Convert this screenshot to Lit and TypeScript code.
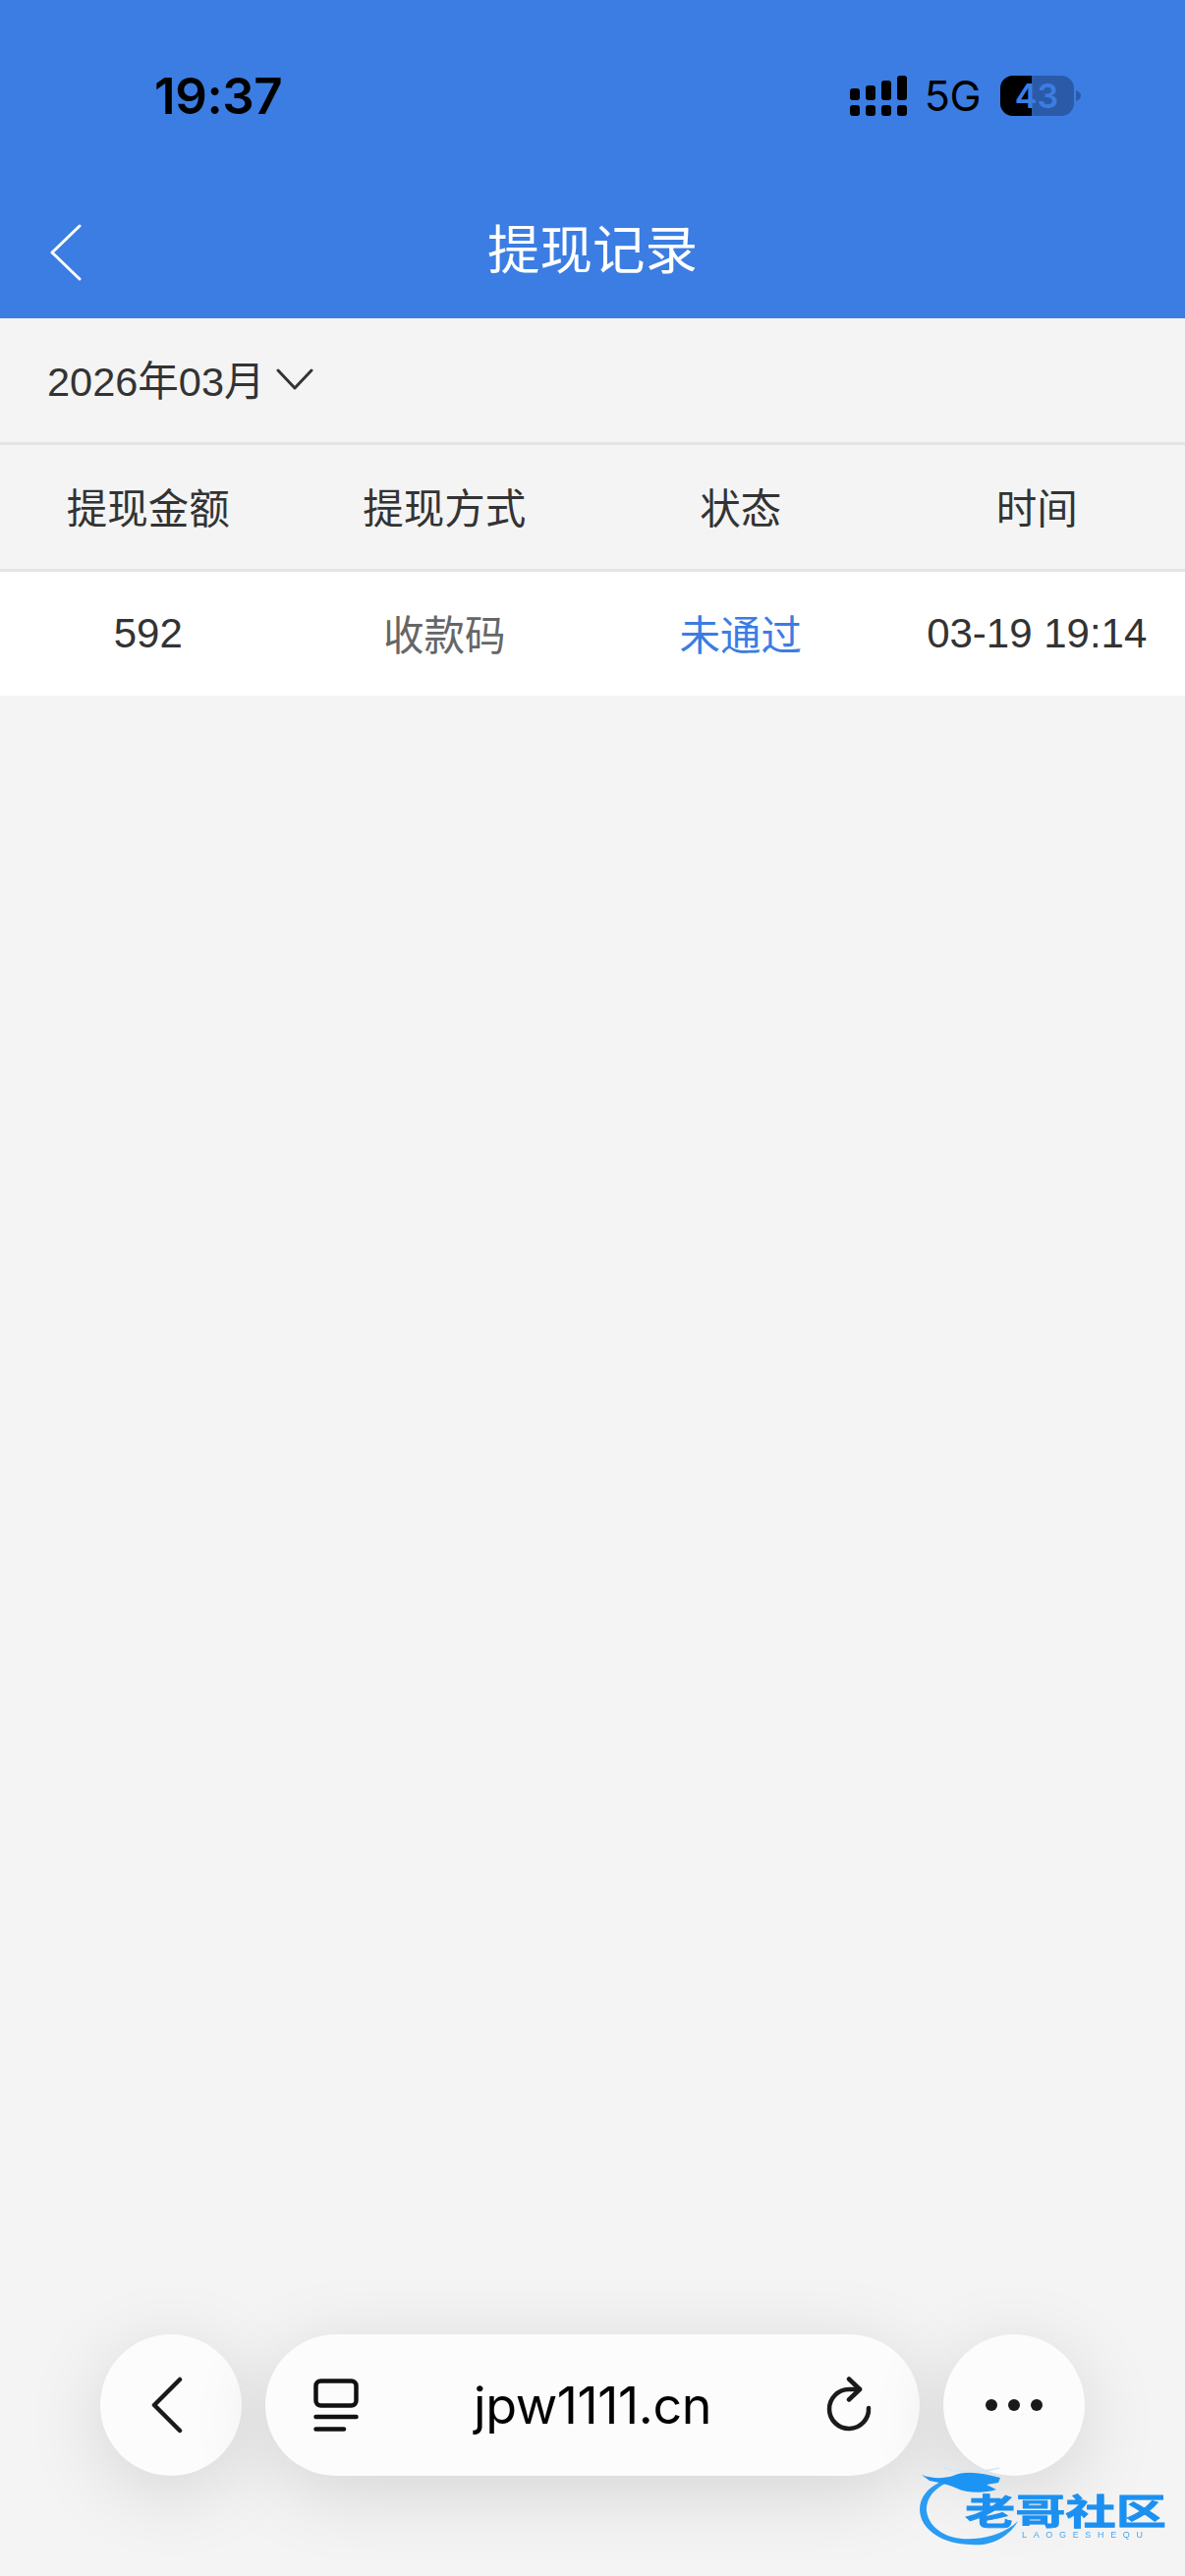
import { LitElement, html, css } from "lit";
import { customElement } from "lit/decorators.js";

@customElement("app-root")
export class AppRoot extends LitElement {
  static styles = css`
    :host {
      display: block;
      position: relative;
      width: 1206px;
      height: 2622px;
      overflow: hidden;
      background: #f4f4f4;
      font-family: "Liberation Sans", "Noto Sans CJK SC", sans-serif;
      color: #333;
    }
    .top { background: #3b7de2; height: 324px; display: flex; flex-direction: column; }
    .status { height: 195px; display: flex; align-items: center; justify-content: space-between; padding: 0 106px 0 157px; color: #000; flex: none; }
    .time { font: 600 51px Inter, sans-serif; letter-spacing: -0.4px; line-height: 1; }
    .sys { display: flex; align-items: center; }
    .sig { display: block; width: 58px; height: 41px; }
    .net { font: 400 43px Inter, sans-serif; line-height: 1; margin: 0 20px 0 18px; letter-spacing: -0.5px; }
    .batt { display: block; width: 82px; height: 41px; }
    .batt text { font: 600 34px Inter, sans-serif; fill: #3b7de2; }
    .nav { flex: 1; position: relative; display: flex; align-items: center; justify-content: center; padding-bottom: 8px; }
    .nav .title { color: #fff; font-size: 53.500px; line-height: 1; }
    .nav svg { position: absolute; left: 50px; top: 33px; width: 34px; height: 58px; }
    .date { height: 126px; display: flex; align-items: center; padding: 0 0 5px 48px; box-sizing: border-box; gap: 12px; font-size: 41.500px; }
    .date svg { width: 38px; height: 22px; display: block; margin-top: 3px; }
    .grid { display: grid; grid-template-columns: repeat(4, 1fr); height: 126px; border-top: 3px solid #e4e4e4; font-size: 41.500px; text-align: center; align-items: center; }
    .grid > div { margin-top: -3px; }
    .grid > .num { font-size: 42px; margin-top: -1px; }
    .row { background: #fff; }
    .muted { color: #666; }
    .blue { color: #3b7de2; }
    .bar { position: absolute; left: 102px; right: 102px; bottom: 102px; display: flex; gap: 24px; height: 144px; }
    .btn, .pill { background: #fcfcfc; box-shadow: 0 16px 80px rgba(0, 0, 0, 0.13); border-radius: 72px; display: flex; align-items: center; }
    .btn { width: 144px; justify-content: center; flex: none; }
    .pill { flex: 1; justify-content: space-between; padding: 0 47px 0 47px; color: #000; }
    .url { font: 400 52px Inter, sans-serif; letter-spacing: -0.4px; }
    .ic { display: block; }
    .chev { margin-right: 9px; }
    .mark { position: absolute; left: 930px; top: 2500px; width: 270px; height: 100px; filter: blur(0.7px); }
    .mark .cn { font: 700 36px "Noto Sans CJK SC", sans-serif; fill: #1c90f0; stroke: #1c90f0; stroke-width: 0.8px; }
    .mark .en { font: 400 9px "Liberation Sans", sans-serif; fill: #4aa6ee; }
  `;

  render() {
    return html`
      <div class="top">
        <div class="status">
          <div class="time">19:37</div>
          <div class="sys">
            <svg class="sig" viewBox="0 0 58 41" fill="#000">
              <rect x="0" y="30" width="10" height="11" rx="3" /><rect x="16" y="30" width="10" height="11" rx="3" />
              <rect x="32" y="30" width="10" height="11" rx="3" /><rect x="48" y="30" width="10" height="11" rx="3" />
              <rect x="0" y="13" width="10" height="12" rx="3" /><rect x="16" y="10" width="10" height="15" rx="3" />
              <rect x="32" y="5" width="10" height="20" rx="3" /><rect x="48" y="0" width="10" height="25" rx="3" />
            </svg>
            <div class="net">5G</div>
            <svg class="batt" viewBox="0 0 82 41">
              <rect x="0" y="0" width="75" height="41" rx="13" fill="#2b5aa8" />
              <path d="M13 0H32V41H13A13 13 0 0 1 0 28V13A13 13 0 0 1 13 0Z" fill="#000" />
              <path d="M77 15C80 16 82 18 82 20.5C82 23 80 25 77 26Z" fill="#2b5aa8" />
              <text x="37" y="33" text-anchor="middle">43</text>
            </svg>
          </div>
        </div>
        <div class="nav">
          <svg viewBox="0 0 34 58" fill="none" stroke="#fff" stroke-width="3" stroke-linecap="round" stroke-linejoin="round"><path d="M31 2L3 29L31 56" /></svg>
          <div class="title">提现记录</div>
        </div>
      </div>
      <div class="date">
        <span>2026年03月</span>
        <svg viewBox="0 0 38 22" fill="none" stroke="#333" stroke-width="3" stroke-linecap="round" stroke-linejoin="round"><path d="M2 2L19 20L36 2" /></svg>
      </div>
      <div class="grid"><div>提现金额</div><div>提现方式</div><div>状态</div><div>时间</div></div>
      <div class="grid row"><div class="num">592</div><div class="muted">收款码</div><div class="blue">未通过</div><div class="num">03-19 19:14</div></div>

      <div class="bar">
        <div class="btn">
          <svg class="ic chev" width="32" height="58" viewBox="0 0 32 58" fill="none" stroke="#1a1a1a" stroke-width="4.500" stroke-linecap="round" stroke-linejoin="round"><path d="M29 3L3 29L29 55" /></svg>
        </div>
        <div class="pill">
          <svg class="ic" width="50" height="58" viewBox="0 0 50 58" fill="none" stroke="#111" stroke-width="4.500" stroke-linecap="round">
            <rect x="4.500" y="4.500" width="41" height="25" rx="5" />
            <path d="M4.500 41H45.500" /><path d="M4.500 53.500H33" />
          </svg>
          <div class="url">jpw1111.cn</div>
          <svg class="ic" width="50" height="58" viewBox="0 0 50 58" fill="none" stroke="#1a1a1a" stroke-width="4.500" stroke-linecap="round" stroke-linejoin="round">
            <path d="M45 32A20 20 0 1 1 25 13H36" />
            <path d="M25 2.500L36 13L25 23.500" />
          </svg>
        </div>
        <div class="btn">
          <svg class="ic" width="60" height="12" viewBox="0 0 60 12" fill="#1a1a1a"><circle cx="7" cy="6" r="6" /><circle cx="30" cy="6" r="6" /><circle cx="53" cy="6" r="6" /></svg>
        </div>
      </div>

      <svg class="mark" viewBox="0 0 270 100" fill="none">
        <path d="M34 27C18 34 12 46 13 56C16 76 38 86 60 84C80 83 96 76 106 66C96 84 76 92 58 90C32 90 6 76 6 54C6 40 18 28 34 24Z" fill="#2a9cf2" />
        <path d="M8 19C18 23 30 23 40 20C52 14 70 17 88 22L86 27L74 29L84 34C72 38 54 38 42 32C36 29 26 27 16 25Z" fill="#1c94f4" />
        <path d="M30 12C50 18 70 16 87 12" stroke="#cfe6fa" stroke-width="1.500" />
        <text class="cn" x="52" y="70" textLength="205" lengthAdjust="spacingAndGlyphs">老哥社区</text>
        <text class="en" x="110" y="83" textLength="123" lengthAdjust="spacing">LAOGESHEQU</text>
      </svg>
    `;
  }
}
